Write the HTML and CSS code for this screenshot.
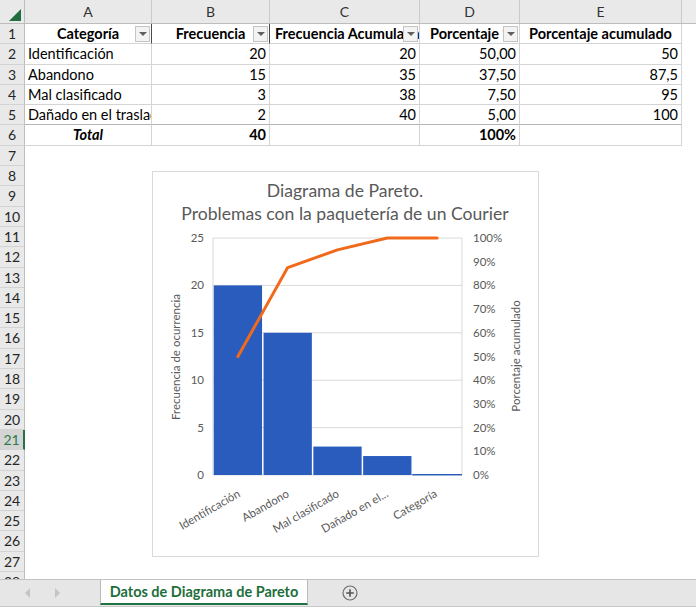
FILE: index.html
```html
<!DOCTYPE html>
<html lang="es">
<head>
<meta charset="utf-8">
<title>Datos de Diagrama de Pareto</title>
<link rel="stylesheet" href="styles.css">
</head>
<body>
<div class="app">
  <div class="sheet">
    <div class="row colhead">
      <div class="corner"><span class="tri"></span></div>
      <div class="ch">A</div>
      <div class="ch">B</div>
      <div class="ch">C</div>
      <div class="ch">D</div>
      <div class="ch">E</div>
      <div class="ch rest"></div>
    </div>

    <div class="row">
      <div class="rh">1</div>
      <div class="c th dark"><span class="lbl center">Categoría</span><span class="dd"></span></div>
      <div class="c th dark"><span class="lbl center">Frecuencia</span><span class="dd"></span></div>
      <div class="c th"><span class="lbl left">Frecuencia Acumulada</span><span class="dd"></span></div>
      <div class="c th"><span class="lbl leftd">Porcentaje %</span><span class="dd"></span></div>
      <div class="c th"><span class="lbl center">Porcentaje acumulado</span></div>
      <div class="f"></div>
    </div>

    <div class="row">
      <div class="rh">2</div>
      <div class="c">Identificación</div>
      <div class="c num">20</div>
      <div class="c num">20</div>
      <div class="c num">50,00</div>
      <div class="c num">50</div>
      <div class="f"></div>
    </div>
    <div class="row">
      <div class="rh">3</div>
      <div class="c">Abandono</div>
      <div class="c num">15</div>
      <div class="c num">35</div>
      <div class="c num">37,50</div>
      <div class="c num">87,5</div>
      <div class="f"></div>
    </div>
    <div class="row">
      <div class="rh">4</div>
      <div class="c">Mal clasificado</div>
      <div class="c num">3</div>
      <div class="c num">38</div>
      <div class="c num">7,50</div>
      <div class="c num">95</div>
      <div class="f"></div>
    </div>
    <div class="row pretotal">
      <div class="rh">5</div>
      <div class="c">Dañado en el traslado</div>
      <div class="c num">2</div>
      <div class="c num">40</div>
      <div class="c num">5,00</div>
      <div class="c num">100</div>
      <div class="f"></div>
    </div>
    <div class="row">
      <div class="rh">6</div>
      <div class="c total">Total</div>
      <div class="c num bold">40</div>
      <div class="c num"></div>
      <div class="c num bold">100%</div>
      <div class="c num"></div>
      <div class="f"></div>
    </div>

    <div class="row"><div class="rh">7</div></div>
    <div class="row"><div class="rh">8</div></div>
    <div class="row"><div class="rh">9</div></div>
    <div class="row"><div class="rh">10</div></div>
    <div class="row"><div class="rh">11</div></div>
    <div class="row"><div class="rh">12</div></div>
    <div class="row"><div class="rh">13</div></div>
    <div class="row"><div class="rh">14</div></div>
    <div class="row"><div class="rh">15</div></div>
    <div class="row"><div class="rh">16</div></div>
    <div class="row"><div class="rh">17</div></div>
    <div class="row"><div class="rh">18</div></div>
    <div class="row"><div class="rh">19</div></div>
    <div class="row"><div class="rh">20</div></div>
    <div class="row"><div class="rh sel">21</div></div>
    <div class="row"><div class="rh">22</div></div>
    <div class="row"><div class="rh">23</div></div>
    <div class="row"><div class="rh">24</div></div>
    <div class="row"><div class="rh">25</div></div>
    <div class="row"><div class="rh">26</div></div>
    <div class="row"><div class="rh">27</div></div>
    <div class="row"><div class="rh">28</div></div>
  </div>

  <div class="chart">
    <svg width="386" height="385" viewBox="0 0 386 385" xmlns="http://www.w3.org/2000/svg">
      <text class="ttl" x="192" y="25" text-anchor="middle">Diagrama de Pareto.</text>
      <text class="ttl" x="192" y="48" text-anchor="middle">Problemas con la paquetería de un Courier</text>

      <g class="grid">
        <line x1="60" y1="66" x2="309" y2="66"/>
        <line x1="60" y1="113.4" x2="309" y2="113.4"/>
        <line x1="60" y1="160.8" x2="309" y2="160.8"/>
        <line x1="60" y1="208.2" x2="309" y2="208.2"/>
        <line x1="60" y1="255.6" x2="309" y2="255.6"/>
        <line x1="60" y1="303" x2="309" y2="303"/>
        <line x1="60" y1="66" x2="60" y2="303"/>
        <line x1="309" y1="66" x2="309" y2="303"/>
      </g>

      <g class="bars">
        <rect x="60.75" y="113.4" width="48.3" height="189.6"/>
        <rect x="110.55" y="160.8" width="48.3" height="142.2"/>
        <rect x="160.35" y="274.56" width="48.3" height="28.44"/>
        <rect x="210.15" y="284.04" width="48.3" height="18.96"/>
        <rect x="259.2" y="302" width="49.8" height="1.4"/>
      </g>

      <polyline class="cum" points="84.9,184.5 134.7,95.6 184.5,77.85 234.3,66 284.1,66"/>

      <g class="ax" text-anchor="end">
        <text x="51" y="70">25</text>
        <text x="51" y="117.4">20</text>
        <text x="51" y="164.8">15</text>
        <text x="51" y="212.2">10</text>
        <text x="51" y="259.6">5</text>
        <text x="51" y="307">0</text>
      </g>
      <g class="ax">
        <text x="320" y="70">100%</text>
        <text x="320" y="93.7">90%</text>
        <text x="320" y="117.4">80%</text>
        <text x="320" y="141.1">70%</text>
        <text x="320" y="164.8">60%</text>
        <text x="320" y="188.5">50%</text>
        <text x="320" y="212.2">40%</text>
        <text x="320" y="235.9">30%</text>
        <text x="320" y="259.6">20%</text>
        <text x="320" y="283.3">10%</text>
        <text x="320" y="307">0%</text>
      </g>

      <text class="ax" text-anchor="middle" transform="translate(27 185) rotate(-90)">Frecuencia de ocurrencia</text>
      <text class="ax" text-anchor="middle" transform="translate(367 184) rotate(-90)">Porcentaje acumulado</text>

      <g class="ax" text-anchor="end">
        <text transform="translate(88 324) rotate(-30)">Identificación</text>
        <text transform="translate(137 324) rotate(-30)">Abandono</text>
        <text transform="translate(187 324) rotate(-30)">Mal clasificado</text>
        <text transform="translate(236 324) rotate(-30)">Dañado en el...</text>
        <text transform="translate(285 324) rotate(-30)">Categoría</text>
      </g>
    </svg>
  </div>

  <div class="tabbar">
    <div class="nav">
      <svg class="arrow" width="6" height="10" viewBox="0 0 6 10"><path d="M5 0 L0 5 L5 10 Z"/></svg>
      <svg class="arrow" width="6" height="10" viewBox="0 0 6 10"><path d="M1 0 L6 5 L1 10 Z"/></svg>
    </div>
    <div class="tab">Datos de Diagrama de Pareto</div>
    <div class="add">
      <svg width="16" height="16" viewBox="0 0 16 16"><circle cx="8" cy="8" r="7" fill="none" stroke="#6d6d6d" stroke-width="1.2"/><path d="M8 4.2 V11.8 M4.2 8 H11.8" stroke="#555" stroke-width="1.6"/></svg>
    </div>
  </div>
</div>
</body>
</html>
```

FILE: styles.css
```css
* { box-sizing: border-box; }

body {
  margin: 0;
  background: #ffffff;
  font-family: Lato, "Noto Sans", sans-serif;
  color: #000;
}

.app {
  position: relative;
  width: 696px;
  height: 610px;
  overflow: hidden;
}

.sheet {
  height: 579px;
  overflow: hidden;
}

.row {
  display: grid;
  grid-template-columns: 25px 127px 118px 150px 100px 162px 14px;
  height: 20.3px;
}

.colhead {
  height: 24px;
  background: #e9e9e9;
  border-bottom: 1px solid #bdbdbd;
}

.corner {
  display: flex;
  justify-content: flex-end;
  align-items: flex-end;
  padding: 0 3px 2px 0;
  border-right: 1px solid #bdbdbd;
}

.tri {
  width: 0;
  height: 0;
  border-left: 12px solid transparent;
  border-bottom: 12px solid #1f6e3f;
}

.ch {
  border-right: 1px solid #cacaca;
  text-align: center;
  font-size: 14px;
  line-height: 23px;
  color: #333;
}

.ch.rest {
  border-right: none;
  background: #ececec;
}

.rh {
  background: #e9e9e9;
  border-right: 1px solid #bdbdbd;
  border-bottom: 1px solid #d3d3d3;
  text-align: center;
  font-size: 14px;
  line-height: 19px;
  color: #262626;
}

.rh.sel {
  background: #d4d4d4;
  color: #2b7a4b;
  border-right: 2px solid #217346;
}

.c {
  border-right: 1px solid #d4d4d4;
  border-bottom: 1px solid #d4d4d4;
  font-size: 14.5px;
  line-height: 19px;
  padding: 0 3px;
  white-space: nowrap;
  overflow: hidden;
}

.num { text-align: right; }
.bold { font-weight: bold; }

.total {
  text-align: center;
  font-weight: bold;
  font-style: italic;
}

.pretotal .c { border-bottom-color: #b4b4b4; }

.th {
  position: relative;
  font-weight: bold;
  padding: 0;
  display: flex;
  align-items: center;
}

.th.dark { border-right-color: #4a4a4a; }

.lbl {
  flex: 1;
  overflow: hidden;
  white-space: nowrap;
}

.lbl.center { text-align: center; }
.lbl.left { padding-left: 5px; }
.lbl.leftd { padding-left: 10px; }

.dd {
  position: absolute;
  right: 1px;
  top: 2px;
  width: 15px;
  height: 16px;
  background: #f3f3f3;
  border: 1px solid #c4c4c4;
  display: flex;
  align-items: center;
  justify-content: center;
}

.dd::after {
  content: "";
  width: 0;
  height: 0;
  border-left: 4px solid transparent;
  border-right: 4px solid transparent;
  border-top: 4px solid #606060;
}

.f { background: #fff; }

/* chart overlay */
.chart {
  position: absolute;
  left: 152px;
  top: 171px;
  width: 387px;
  height: 386px;
  background: #fff;
  border: 1px solid #d9d9d9;
}

.chart svg { display: block; }

.chart text {
  font-family: Lato, "Noto Sans", sans-serif;
  fill: #595959;
}

.ttl { font-size: 17.6px; }
.ax { font-size: 11.5px; }

.grid line {
  stroke: #d9d9d9;
  stroke-width: 1;
}

.bars rect { fill: #2a5cbe; }

.cum {
  fill: none;
  stroke: #f06a1c;
  stroke-width: 3;
  stroke-linejoin: round;
  stroke-linecap: round;
}

/* sheet tabs */
.tabbar {
  height: 28px;
  background: #e6e6e6;
  border-top: 1px solid #c2c2c2;
  border-bottom: 1px solid #c8c8c8;
  display: flex;
  align-items: stretch;
}

.nav {
  width: 100px;
  display: flex;
  align-items: center;
  padding-left: 25px;
  gap: 23px;
}

.arrow path { fill: #c4c4c4; }

.tab {
  width: 208px;
  height: 25px;
  background: #fff;
  border-left: 1px solid #b9b9b9;
  border-right: 1px solid #b9b9b9;
  border-bottom: 2px solid #217346;
  color: #1e6e3c;
  font-weight: bold;
  font-size: 14.5px;
  text-align: center;
  line-height: 23px;
}

.add {
  display: flex;
  align-items: center;
  padding-left: 34px;
}
```
